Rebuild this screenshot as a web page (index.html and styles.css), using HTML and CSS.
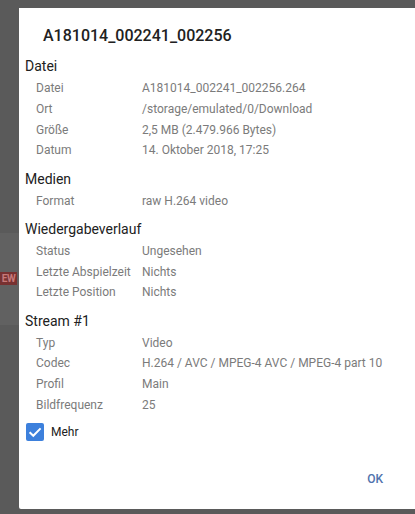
FILE: index.html
```html
<!DOCTYPE html>
<html lang="de">
<head>
    <meta charset="UTF-8">
    <meta name="viewport" content="width=device-width, initial-scale=1.0">
    <title>Medieninfo</title>
    <link rel="stylesheet" href="styles.css">
</head>
<body>
    <div class="screen">
        <div class="backdrop">
            <div class="list-item">
                <span class="badge">EW</span>
            </div>
        </div>

        <div class="dialog">
            <h1 class="title">A181014_002241_002256</h1>

            <div class="section">
                <h2>Datei</h2>
                <div class="row"><span>Datei</span><span>A181014_002241_002256.264</span></div>
                <div class="row"><span>Ort</span><span>/storage/emulated/0/Download</span></div>
                <div class="row"><span>Größe</span><span>2,5 MB (2.479.966 Bytes)</span></div>
                <div class="row"><span>Datum</span><span>14. Oktober 2018, 17:25</span></div>
            </div>

            <div class="section">
                <h2>Medien</h2>
                <div class="row"><span>Format</span><span>raw H.264 video</span></div>
            </div>

            <div class="section">
                <h2>Wiedergabeverlauf</h2>
                <div class="row"><span>Status</span><span>Ungesehen</span></div>
                <div class="row"><span>Letzte Abspielzeit</span><span>Nichts</span></div>
                <div class="row"><span>Letzte Position</span><span>Nichts</span></div>
            </div>

            <div class="section">
                <h2>Stream #1</h2>
                <div class="row"><span>Typ</span><span>Video</span></div>
                <div class="row"><span>Codec</span><span>H.264 / AVC / MPEG-4 AVC / MPEG-4 part 10</span></div>
                <div class="row"><span>Profil</span><span>Main</span></div>
                <div class="row"><span>Bildfrequenz</span><span>25</span></div>
            </div>

            <label class="more">
                <svg class="check" width="18" height="18" viewBox="0 0 18 18">
                    <rect x="0" y="0" width="18" height="18" rx="2" fill="#3d80dc"/>
                    <path d="M3.6 9.2 L7.3 12.8 L14.6 5.4" fill="none" stroke="#fff" stroke-width="2"/>
                </svg>
                Mehr
            </label>

            <div class="actions">
                <button class="ok">OK</button>
            </div>
        </div>
    </div>
</body>
</html>
```

FILE: styles.css
```css
body {
    margin: 0;
    background-color: #5a5a5a;
    font-family: Roboto, "Liberation Sans", sans-serif;
}
.screen {
    display: flex;
    height: 514px;
    overflow: hidden;
}
.backdrop {
    width: 19px;
    flex-shrink: 0;
    padding-top: 233px;
}
.list-item {
    height: 92px;
    background-color: #616161;
    display: flex;
    align-items: center;
}
.badge {
    width: 17px;
    background-color: #783131;
    color: #c77a7a;
    font-size: 10px;
    font-weight: bold;
    letter-spacing: -0.5px;
    line-height: 13px;
    text-align: center;
    margin-top: -2px;
}
.dialog {
    flex: 1;
    margin-top: 8px;
    height: 501px;
    background: white;
    border-bottom-left-radius: 2px;
    display: flex;
    flex-direction: column;
}
.title {
    margin: 18px 0 10px 24px;
    font-size: 16px;
    font-weight: 500;
    line-height: 20px;
    color: #212121;
}
.section {
    margin-left: 6px;
}
.section + .section {
    margin-top: 7.5px;
}
.section h2 {
    margin: 0 0 1px 0;
    font-size: 14px;
    font-weight: normal;
    line-height: 21px;
    color: #212121;
}
.row {
    display: grid;
    grid-template-columns: 106px 1fr;
    padding-left: 11px;
    font-size: 12px;
    line-height: 20.75px;
    color: #7b7b7b;
    white-space: nowrap;
}
.more {
    display: flex;
    align-items: center;
    gap: 7px;
    margin: 7.6px 0 0 7px;
    font-size: 12px;
    line-height: 18px;
    color: #212121;
}
.check {
    display: block;
}
.actions {
    margin-top: auto;
    display: flex;
    justify-content: flex-end;
    padding: 0 24px 12px 0;
}
.ok {
    height: 36px;
    padding: 0 8px;
    border: none;
    background: none;
    font-family: Roboto, "Liberation Sans", sans-serif;
    font-size: 12px;
    font-weight: 500;
    color: #4f73ad;
}
```
